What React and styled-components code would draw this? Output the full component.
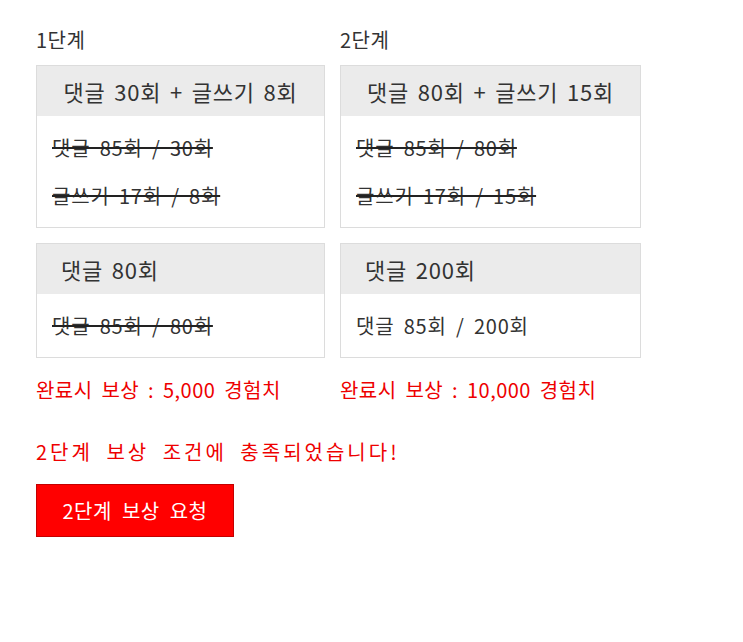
import React from "react";
import styled, { createGlobalStyle } from "styled-components";

const GlobalStyle = createGlobalStyle`
  html, body { margin: 0; padding: 0; background: #fff; }
  body {
    font-family: "Noto Sans CJK KR", "Noto Sans", sans-serif;
    color: #333;
  }
`;

const Page = styled.div`
  padding: 27px 36px 40px;
`;

const Stages = styled.div`
  display: grid;
  grid-template-columns: 289px 301px;
  column-gap: 15px;
  align-items: start;
`;

const Stage = styled.section`
  display: flex;
  flex-direction: column;
`;

const StageTitle = styled.h3`
  margin: 0 0 12px;
  font-size: 20px;
  font-weight: 400;
  line-height: 26px;
  letter-spacing: 0.5px;
  color: #333;
`;

const Mission = styled.div`
  border: 1px solid #dcdcdc;
  background: #fff;
  & + & { margin-top: 15px; }
`;

const MissionHead = styled.div`
  height: 50px;
  display: flex;
  align-items: center;
  justify-content: ${(p) => (p.$center ? "center" : "flex-start")};
  padding: ${(p) => (p.$center ? "0" : "0 24px")};
  background: #ebebeb;
  font-size: 22px;
  letter-spacing: 0.8px;
  word-spacing: 3px;
  white-space: nowrap;
  color: #333;
`;

const MissionBody = styled.ul`
  list-style: none;
  margin: 0;
  padding: 7px 15px 8px;
  display: flex;
  flex-direction: column;
`;

const Progress = styled.li`
  height: 48px;
  display: flex;
  align-items: center;
  font-size: 20px;
  letter-spacing: 0.8px;
  word-spacing: 4px;
  white-space: nowrap;
  color: #333;
  span {
    text-decoration: ${(p) => (p.$done ? "line-through" : "none")};
    text-decoration-thickness: 2px;
    text-decoration-color: #222;
  }
`;

const Reward = styled.p`
  margin: 19px 0 0;
  font-size: 20px;
  line-height: 26px;
  letter-spacing: 0.45px;
  word-spacing: 4px;
  white-space: nowrap;
  color: #e00;
`;

const Notice = styled.p`
  margin: 36px 0 0;
  font-size: 20px;
  line-height: 26px;
  letter-spacing: 3px;
  word-spacing: 6px;
  color: #e00;
`;

const RequestButton = styled.button`
  margin-top: 19px;
  width: 198px;
  height: 53px;
  border: 1px solid #c40000;
  background: #ff0000;
  color: #fff;
  font-family: inherit;
  font-size: 20px;
  letter-spacing: 0.5px;
  word-spacing: 5px;
  cursor: pointer;
`;

const stages = [
  {
    title: "1단계",
    reward: "완료시 보상 : 5,000 경험치",
    missions: [
      {
        head: "댓글 30회 + 글쓰기 8회",
        center: true,
        rows: [
          { text: "댓글 85회 / 30회", done: true },
          { text: "글쓰기 17회 / 8회", done: true },
        ],
      },
      {
        head: "댓글 80회",
        rows: [{ text: "댓글 85회 / 80회", done: true }],
      },
    ],
  },
  {
    title: "2단계",
    reward: "완료시 보상 : 10,000 경험치",
    missions: [
      {
        head: "댓글 80회 + 글쓰기 15회",
        center: true,
        rows: [
          { text: "댓글 85회 / 80회", done: true },
          { text: "글쓰기 17회 / 15회", done: true },
        ],
      },
      {
        head: "댓글 200회",
        rows: [{ text: "댓글 85회 / 200회", done: false }],
      },
    ],
  },
];

export default function App() {
  return (
    <>
      <GlobalStyle />
      <Page>
        <Stages>
          {stages.map((s) => (
            <Stage key={s.title}>
              <StageTitle>{s.title}</StageTitle>
              {s.missions.map((m) => (
                <Mission key={m.head}>
                  <MissionHead $center={m.center}>{m.head}</MissionHead>
                  <MissionBody>
                    {m.rows.map((r) => (
                      <Progress key={r.text} $done={r.done}>
                        <span>{r.text}</span>
                      </Progress>
                    ))}
                  </MissionBody>
                </Mission>
              ))}
              <Reward>{s.reward}</Reward>
            </Stage>
          ))}
        </Stages>
        <Notice>2단계 보상 조건에 충족되었습니다!</Notice>
        <RequestButton type="button">2단계 보상 요청</RequestButton>
      </Page>
    </>
  );
}
